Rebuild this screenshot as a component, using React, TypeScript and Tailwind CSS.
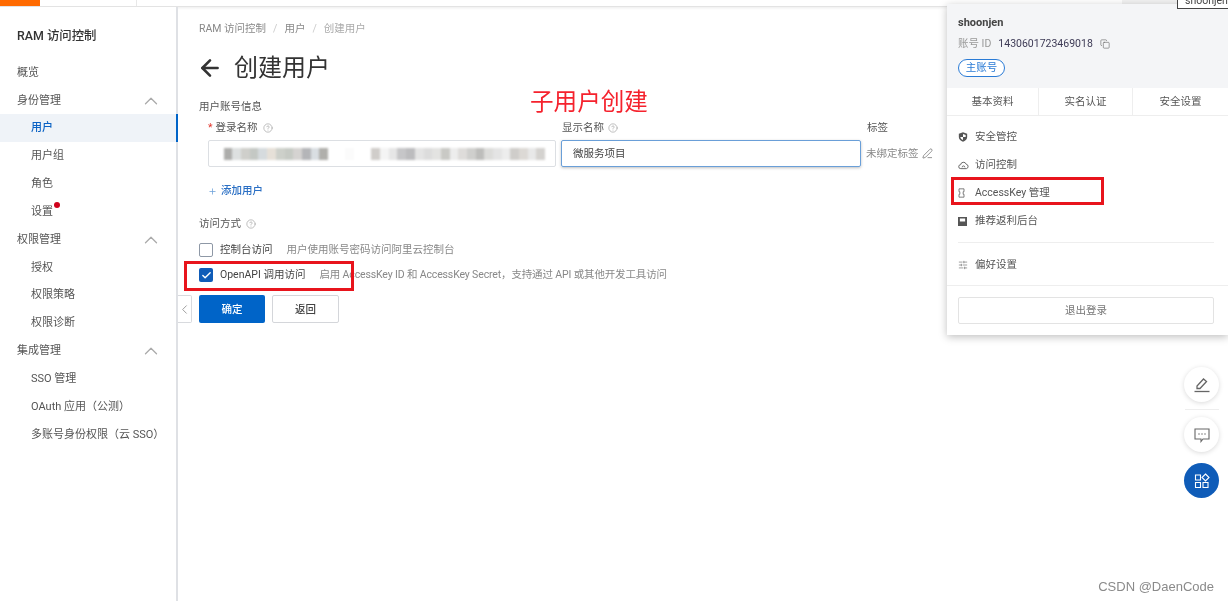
import {
  ArrowLeft,
  Check,
  ChevronLeft,
  ChevronUp,
  CircleHelp,
  Copy,
  PenLine,
  Plus,
  SlidersHorizontal,
} from "lucide-react";

const font = { fontFamily: '"Roboto", "Noto Sans CJK SC", sans-serif' };

type NavItem = { label: string; group?: boolean; active?: boolean; dot?: boolean };

const nav: NavItem[] = [
  { label: "概览", group: true },
  { label: "身份管理", group: true },
  { label: "用户", active: true },
  { label: "用户组" },
  { label: "角色" },
  { label: "设置", dot: true },
  { label: "权限管理", group: true },
  { label: "授权" },
  { label: "权限策略" },
  { label: "权限诊断" },
  { label: "集成管理", group: true },
  { label: "SSO 管理" },
  { label: "OAuth 应用（公测）" },
  { label: "多账号身份权限（云 SSO）" },
];

const mosaic = [
  "#fff", "#adadab", "#dde0e0", "#cfcfcb", "#c4c8c4", "#d6dbde", "#e6e0d8", "#cdd0ca", "#c6cac4",
  "#d5d3d1", "#b4b5b8", "#d9dee2", "#b0afab", "#fff", "#fff", "#fbfbfb", "#fff", "#fff", "#d0cdca", "#f4f4f4", "#e6e6e6",
  "#c6c6c8", "#bcbcbe", "#e4e4e4", "#dcdcdc", "#e3e3e1", "#c9c9c5", "#ededed", "#dedcda", "#cfcfcd", "#bdbdbb", "#dcdcda",
  "#e4e4e4", "#ededed", "#cfcdca", "#dcd9d5", "#e8e8e8", "#d4d2cf",
];

function Help() {
  return <CircleHelp className="w-[10px] h-[10px] text-[#9a9a9a]" strokeWidth={1.5} />;
}

function Sidebar() {
  return (
    <aside className="w-[178px] shrink-0 border-r-2 border-[#dfe1e5] bg-white">
      <div className="h-[51px] pl-[17px] pt-[21px] text-[12.4px] leading-[16px] font-medium text-[#333]">RAM 访问控制</div>
      {nav.map((item) => (
        <div
          key={item.label}
          className={
            item.active
              ? "relative h-[27.85px] pt-[2px] flex items-center pl-[31px] text-[11px] font-medium text-[#0b62c4] bg-[#eff3f8] border-r-2 border-[#0064c8] -mr-[2px]"
              : item.group
                ? "h-[27.85px] pt-[2px] flex items-center justify-between pl-[17px] pr-[14px] text-[11px] text-[#555]"
                : "h-[27.85px] pt-[2px] flex items-center pl-[31px] text-[11px] text-[#555]"
          }
        >
          <span className="relative whitespace-nowrap">
            {item.label}
            {item.dot && <span className="absolute -top-[2px] -right-[7px] w-[6px] h-[6px] rounded-full bg-[#d0021b]" />}
          </span>
          {item.group && item.label !== "概览" && <ChevronUp className="w-[22px] h-[22px] text-[#aaa]" strokeWidth={1.4} />}
        </div>
      ))}
    </aside>
  );
}

function Form() {
  return (
    <main className="flex-1 pl-[21px] pt-[14px] text-[#555]">
      <div className="h-[16px] flex items-center gap-[7px] text-[10.5px] text-[#888]">
        <span>RAM 访问控制</span>
        <span className="text-[#ccc]">/</span>
        <span>用户</span>
        <span className="text-[#ccc]">/</span>
        <span className="text-[#aaa]">创建用户</span>
      </div>
      <div className="mt-[14px] h-[34px] flex items-center gap-[11px]">
        <ArrowLeft className="-ml-[2px] w-[26px] h-[26px] text-[#333]" strokeWidth={2.4} />
        <h1 className="text-[24px] leading-[34px] text-[#333]">创建用户</h1>
      </div>
      <div className="mt-[14px] h-[16px] text-[10.5px] leading-[16px]">用户账号信息</div>

      <div className="mt-[5px] flex pl-[9px] h-[16px] text-[10.5px] leading-[16px]">
        <div className="w-[354px] flex items-center gap-[3px]">
          <span className="text-[#e2342b]">*</span>
          <span>登录名称</span>
          <span className="ml-[2px]"><Help /></span>
        </div>
        <div className="w-[305px] flex items-center gap-[4px]">
          <span>显示名称</span>
          <Help />
        </div>
        <div>标签</div>
      </div>

      <div className="mt-[4px] flex pl-[9px] h-[27px]">
        <div className="w-[348px] h-[27px] border border-[#dcdfe3] rounded-[2px] flex items-center pl-[6px] overflow-hidden">
          <div className="flex h-[12px] blur-[1px]">
            {mosaic.map((c, i) => (
              <span key={i} className="w-[8.7px] h-[12px]" style={{ background: c }} />
            ))}
          </div>
        </div>
        <div className="ml-[5px] w-[300px] h-[27px] border border-[#6a9fd8] rounded-[2px] shadow-[0_1px_3px_rgba(0,0,0,0.25)] flex items-center pl-[11px] text-[10.5px] text-[#444]">
          微服务项目
        </div>
        <div className="ml-[5px] flex items-center gap-[3px] text-[10.5px] text-[#888]">
          <span>未绑定标签</span>
          <PenLine className="w-[11px] h-[11px] text-[#666]" strokeWidth={1.5} />
        </div>
      </div>

      <div className="mt-[16px] pl-[9px] h-[16px] flex items-center gap-[3px] text-[10.5px] font-medium text-[#2a6fc4]">
        <Plus className="w-[9px] h-[9px] text-[#6a9fd8]" strokeWidth={2} />
        <span className="ml-[1px]">添加用户</span>
      </div>

      <div className="mt-[17px] h-[16px] flex items-center gap-[5px] text-[10.5px]">
        <span>访问方式</span>
        <Help />
      </div>

      <div className="mt-[8px] h-[20px] flex items-center text-[10.5px]">
        <span className="w-[14px] h-[14px] border border-[#8e98a6] rounded-[2px]" />
        <span className="ml-[7px] text-[#444]">控制台访问</span>
        <span className="ml-[14px] text-[#888]">用户使用账号密码访问阿里云控制台</span>
      </div>

      <div className="mt-[5px] h-[20px] flex items-center text-[10.5px]">
        <span className="w-[14px] h-[14px] rounded-[2px] bg-[#0f5cb8] flex items-center justify-center">
          <Check className="w-[11px] h-[11px] text-white" strokeWidth={3} />
        </span>
        <span className="ml-[7px] text-[#444]">OpenAPI 调用访问</span>
        <span className="ml-[14px] text-[#888] tracking-[-0.14px]">启用 AccessKey ID 和 AccessKey Secret，支持通过 API 或其他开发工具访问</span>
      </div>

      <div className="mt-[10px] flex gap-[7px] text-[10.5px] font-medium">
        <button className="w-[66px] h-[28px] pt-px rounded-[2px] bg-[#0064c8] text-white">确定</button>
        <button className="w-[67px] h-[28px] pt-px rounded-[2px] border border-[#d4d6da] bg-white text-[#444]">返回</button>
      </div>
    </main>
  );
}

function ShieldIcon() {
  return (
    <svg viewBox="0 0 12 12" className="w-[10px] h-[10px] text-[#555]">
      <path d="M6 .4 11 2.2V6c0 3-2.4 4.9-5 5.7C3.4 10.900 1 9 1 6V2.200z" fill="currentColor" />
      <path d="M6 2.400 9.200 3.500V6H6zM6 6v3.600C4.500 9 2.900 7.800 2.800 6z" fill="#fff" />
    </svg>
  );
}

function CloudIcon() {
  return (
    <svg viewBox="0 0 12 10" fill="none" stroke="currentColor" strokeWidth="1.1" className="w-[11px] h-[9px] text-[#666]">
      <path d="M3 8.500a2.200 2.200 0 0 1-.2-4.400A3.200 3.200 0 0 1 9 3.600a2.500 2.500 0 0 1 .2 4.900z" />
      <path d="M4.500 7a1.500 1.500 0 0 1 3 0" />
    </svg>
  );
}

function KeyIcon() {
  return (
    <svg viewBox="0 0 8 12" fill="none" stroke="currentColor" strokeWidth="1" className="w-[7px] h-[10px] text-[#666]">
      <path d="M1 1h6v3.500H6v3h1V11H1V7.500h1v-3H1z" />
    </svg>
  );
}

function BookIcon() {
  return (
    <svg viewBox="0 0 12 12" className="w-[9px] h-[9px] text-[#555]">
      <path d="M0 0h12v12H0z" fill="currentColor" />
      <path d="M2.500 2h7v4h-7z" fill="#fff" />
    </svg>
  );
}

const panelLinks = [
  { label: "安全管控", icon: <ShieldIcon /> },
  { label: "访问控制", icon: <CloudIcon /> },
  { label: "AccessKey 管理", icon: <KeyIcon /> },
  { label: "推荐返利后台", icon: <BookIcon /> },
];

function AccountPanel() {
  return (
    <div className="absolute left-[947px] top-[4px] w-[281px] h-[331px] bg-white shadow-[0_2px_8px_rgba(0,0,0,0.25)] text-[#555]">
      <div className="h-[84px] bg-[#f4f5f7] pl-[11px] pt-[9px]">
        <div className="h-[20px] flex items-center text-[11px] font-bold text-[#444]">shoonjen</div>
        <div className="h-[20px] mt-[1px] flex items-center text-[10.5px]">
          <span className="text-[#999]">账号 ID</span>
          <span className="ml-[7px] text-[#3d3a55]">1430601723469018</span>
          <Copy className="ml-[7px] w-[10px] h-[10px] text-[#666]" strokeWidth={1.5} />
        </div>
        <span className="mt-[3px] inline-flex items-center justify-center w-[47px] h-[18px] rounded-full border border-[#2a7bd6] bg-white text-[10.5px] text-[#2a7bd6]">
          主账号
        </span>
      </div>
      <div className="h-[28px] flex border-b border-[#eee] text-[10.5px]">
        <div className="w-[92px] flex items-center justify-center border-r border-[#eee]">基本资料</div>
        <div className="w-[94px] flex items-center justify-center border-r border-[#eee]">实名认证</div>
        <div className="flex-1 flex items-center justify-center">安全设置</div>
      </div>
      <div className="pt-[7px] pb-[7px]">
        {panelLinks.map((l) => (
          <div key={l.label} className="h-[28px] flex items-center text-[10.5px]">
            <span className="w-[28px] pl-[11px] flex items-center">{l.icon}</span>
            <span>{l.label}</span>
          </div>
        ))}
      </div>
      <div className="ml-[11px] mr-[14px] border-t border-[#eee]" />
      <div className="h-[42px] pt-[2px] flex items-center text-[10.5px]">
        <span className="w-[28px] pl-[11px] flex items-center">
          <SlidersHorizontal className="w-[10px] h-[10px] text-[#666]" strokeWidth={1.5} />
        </span>
        <span>偏好设置</span>
      </div>
      <div className="border-t border-[#eee] pt-[11px] pl-[11px] pr-[14px]">
        <button className="w-full h-[27px] rounded-[2px] border border-[#e3e3e3] bg-white text-[10.5px] text-[#777]">退出登录</button>
      </div>
    </div>
  );
}

function FloatingTools() {
  return (
    <div className="absolute left-[1184px] top-[367px] w-[35px] flex flex-col items-center">
      <div className="w-[35px] h-[35px] rounded-full bg-white shadow-[0_1px_5px_rgba(0,0,0,0.15)] flex items-center justify-center">
        <svg viewBox="0 0 16 16" fill="none" stroke="currentColor" strokeWidth="1.3" className="w-[16px] h-[16px] text-[#666]">
          <path d="M3 11.500V9l6.500-7L12.500 4.500 6 11.500z" />
          <path d="M.5 14.500h15" />
        </svg>
      </div>
      <div className="mt-[7px] w-[34px] border-t border-[#eee]" />
      <div className="mt-[7px] w-[35px] h-[35px] rounded-full bg-white shadow-[0_1px_5px_rgba(0,0,0,0.15)] flex items-center justify-center">
        <svg viewBox="0 0 16 16" fill="none" stroke="currentColor" strokeWidth="1.1" className="w-[16px] h-[16px] text-[#666]">
          <path d="M1 2h14v10H9l-2 2.500V12H1z" />
          <path d="M4.500 7h1M7.500 7h1M10.500 7h1" strokeWidth="1.4" />
        </svg>
      </div>
      <div className="mt-[11px] w-[35px] h-[35px] rounded-full bg-[#0f5cb8] flex items-center justify-center">
        <svg viewBox="0 0 16 16" fill="none" stroke="currentColor" strokeWidth="1.1" className="w-[16px] h-[16px] text-white">
          <path d="M1.500 2h5v5h-5zM1.500 9.500h5v5h-5zM9 9.500h5v5H9z" />
          <path d="M11.500 1 15 4.500 11.500 8 8 4.500z" />
        </svg>
      </div>
    </div>
  );
}

export default function App() {
  return (
    <div className="relative w-[1228px] h-[601px] overflow-hidden bg-white blur-[0.45px]" style={font}>
      <div className="h-[7px] flex border-b border-[#e3e3e3] shadow-[0_1px_3px_rgba(0,0,0,0.08)]">
        <div className="w-[40px] bg-[#ff6a00]" />
        <div className="w-[97px] border-r border-[#e8e8e8]" />
        <div className="ml-auto w-[106px] bg-[#f2f2f2]" />
      </div>
      <div className="flex h-[594px]">
        <Sidebar />
        <Form />
      </div>

      <div className="absolute left-[178px] top-[295px] w-[14px] h-[28px] bg-white border border-l-0 border-[#d8dade] rounded-r-[2px] flex items-center justify-center">
        <ChevronLeft className="w-[15px] h-[15px] shrink-0 text-[#999]" strokeWidth={1.5} />
      </div>

      <AccountPanel />
      <FloatingTools />

      <div className="absolute left-[1177px] -top-[7px] w-[60px] h-[16px] bg-white border border-[#444] pl-[7px] text-[10.5px] leading-[14px] text-[#444]">
        shoonjen
      </div>

      <div className="absolute left-[530px] top-[86px] text-[23.6px] leading-[32px] text-[#f5222d]">子用户创建</div>
      <div className="absolute left-[184px] top-[261px] w-[170px] h-[30px] border-[3px] border-[#e8141c]" />
      <div className="absolute left-[951px] top-[177px] w-[153px] h-[28px] border-[3px] border-[#e8141c]" />

      <div
        className="absolute right-[14px] bottom-[6px] text-[13px] leading-[16px] text-[#8a8a8a]"
        style={{ fontFamily: '"Liberation Sans", sans-serif' }}
      >
        CSDN @DaenCode
      </div>
    </div>
  );
}
